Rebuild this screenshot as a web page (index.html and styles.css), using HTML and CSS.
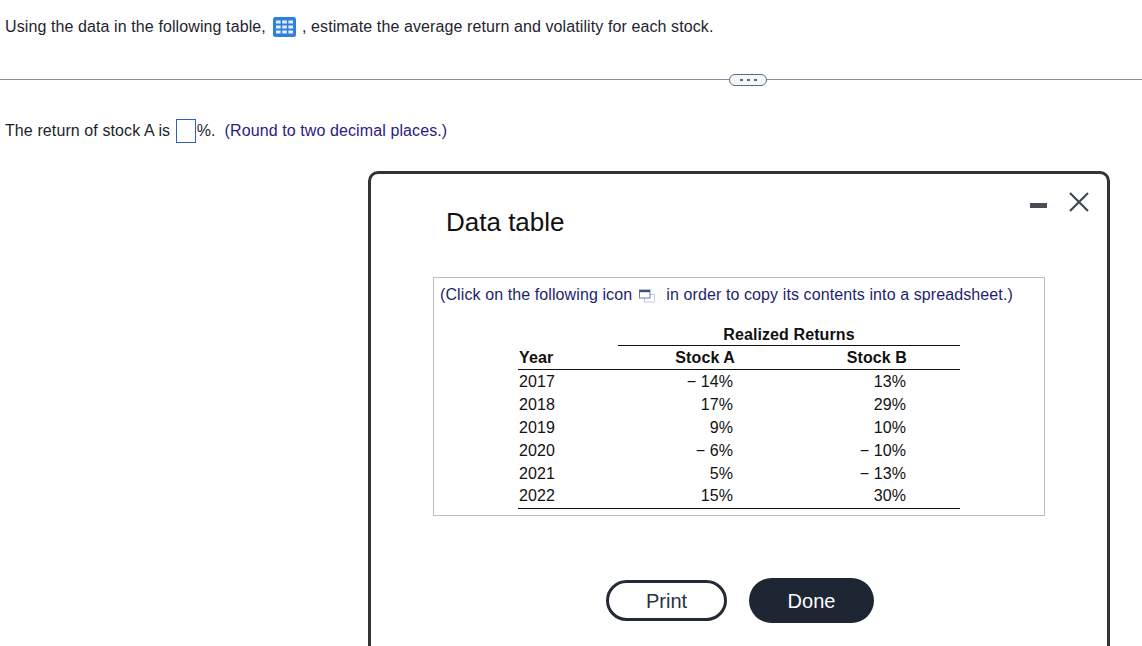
FILE: index.html
```html
<!DOCTYPE html>
<html lang="en">
<head>
<meta charset="utf-8">
<title>Data table</title>
<link rel="stylesheet" href="styles.css">
</head>
<body>
<main class="page">
  <p class="question">Using the data in the following table,
    <svg class="grid-icon" width="23" height="20" viewBox="0 0 23 20"><rect width="23" height="20" rx="2.5" fill="#2f7fdc"/><g fill="#e4f0fc"><rect x="3" y="3.5" width="4.6" height="3"/><rect x="9.2" y="3.5" width="4.6" height="3"/><rect x="15.4" y="3.5" width="4.6" height="3"/><rect x="3" y="8.5" width="4.6" height="3"/><rect x="9.2" y="8.5" width="4.6" height="3"/><rect x="15.4" y="8.5" width="4.6" height="3"/><rect x="3" y="13.5" width="4.6" height="3"/><rect x="9.2" y="13.5" width="4.6" height="3"/><rect x="15.4" y="13.5" width="4.6" height="3"/></g></svg>
    , estimate the average return and volatility for each stock.</p>
  <div class="divider"><span class="more"><i></i><i></i><i></i></span></div>
  <p class="answer">The return of stock A is <span class="blank"></span><span class="pct">%.</span><span class="hint">(Round to two decimal places.)</span></p>
  <section class="modal">
    <div class="win-controls">
      <span class="minimize"></span>
      <svg class="close" width="20" height="20" viewBox="0 0 20 20"><path d="M1 1 L19 19 M19 1 L1 19" stroke="#3d4a5a" stroke-width="2.2" fill="none"/></svg>
    </div>
    <h1 class="title">Data table</h1>
    <div class="panel">
      <p class="note">(Click on the following icon
        <svg class="copy-icon" width="16" height="14" viewBox="0 0 16 14"><rect x="5.5" y="5.5" width="10" height="7.5" fill="#fff" stroke="#c3c8e4"/><rect x="0.5" y="1" width="10.5" height="8" fill="#fff" stroke="#6f7fa8"/><rect x="0.5" y="1" width="10.5" height="2.2" fill="#3f4f88"/></svg>
        in order to copy its contents into a spreadsheet.)</p>
      <table class="returns">
        <colgroup><col class="c-year"><col class="c-a"><col class="c-b"></colgroup>
        <thead>
          <tr class="group"><th></th><th colspan="2" class="center">Realized Returns</th></tr>
          <tr class="heads"><th class="year">Year</th><th>Stock A</th><th>Stock B</th></tr>
        </thead>
        <tbody>
          <tr><td class="year">2017</td><td>− 14%</td><td>13%</td></tr>
          <tr><td class="year">2018</td><td>17%</td><td>29%</td></tr>
          <tr><td class="year">2019</td><td>9%</td><td>10%</td></tr>
          <tr><td class="year">2020</td><td>− 6%</td><td>− 10%</td></tr>
          <tr><td class="year">2021</td><td>5%</td><td>− 13%</td></tr>
          <tr><td class="year">2022</td><td>15%</td><td>30%</td></tr>
        </tbody>
      </table>
    </div>
    <div class="actions">
      <button class="btn print" type="button">Print</button>
      <button class="btn done" type="button">Done</button>
    </div>
  </section>
</main>
</body>
</html>
```
FILE: styles.css
```css
html, body { margin: 0; height: 646px; overflow: hidden; background: #fff; }
body { font: 16px/18px "Liberation Sans", Arial, sans-serif; color: #1f2430; letter-spacing: 0.1px; }
.page { display: flow-root; }
.question { margin: 16px 0 0 5px; height: 22px; line-height: 22px; white-space: nowrap; }
.grid-icon { vertical-align: -5px; margin: 0 1px 0 3px; }
.divider { margin-top: 41px; height: 1px; background: #8a8f9a; display: flex; justify-content: flex-start; }
.more { margin: -5px 0 0 729px; width: 38px; height: 12px; box-sizing: border-box; border: 1.5px solid #5b6b7c; border-radius: 6px; background: #f4f6f8; display: flex; align-items: center; justify-content: center; gap: 4px; }
.more i { width: 3px; height: 2px; background: #5b6b7c; }
.answer { margin: 38px 0 0 5px; height: 26px; display: flex; align-items: center; white-space: pre; color: #1b1f2a; }
.blank { width: 18px; height: 22px; border: 1px solid #2f5fbf; margin-left: 1px; }
.pct { margin-left: 1px; }
.hint { margin-left: 9px; color: #2e1a80; }
.modal { position: relative; margin: 27px 0 0 368px; width: 742px; height: 475px; box-sizing: border-box; border: 3px solid #333; border-bottom: 0; border-radius: 10px 10px 0 0; }
.win-controls { position: absolute; top: 18px; right: 18px; display: flex; align-items: center; gap: 22px; }
.minimize { width: 17px; height: 5px; margin-top: 6px; background: #4a4d55; }
.title { margin: 31px 0 0 75px; font-size: 26px; line-height: 34px; font-weight: 400; color: #111; letter-spacing: 0; }
.panel { margin: 38px 0 0 62px; width: 612px; height: 239px; box-sizing: border-box; border: 1px solid #bdbdbd; }
.note { margin: 8px 0 0 6px; height: 18px; color: #1d1f6e; white-space: nowrap; }
.copy-icon { vertical-align: -3px; margin: 0 7px 0 2px; }
.returns { margin: 19px 0 0 84px; width: 442px; border-collapse: collapse; table-layout: fixed; color: #111; }
.c-year { width: 100px; }
.c-a { width: 117px; }
.returns th, .returns td { padding: 2px 0 0; height: 23px; box-sizing: border-box; text-align: right; font-weight: 400; }
.returns th { font-weight: 700; }
.returns td:nth-child(2) { padding-right: 2px; }
.returns .year { text-align: left; padding-left: 1px; }
.returns .center { text-align: center; border-bottom: 1px solid #111; }
.group th { height: 22px; padding-top: 3px; }
.heads th { height: 24px; border-bottom: 1px solid #111; padding-top: 2px; }
.returns tbody tr:last-child td { height: 24px; padding-top: 1px; border-bottom: 1px solid #111; }
.returns tbody td:nth-child(3) { padding-right: 54px; }
.returns .heads th:nth-child(3) { padding-right: 53px; }
.actions { display: flex; align-items: center; gap: 22px; margin: 62px 0 0 235px; }
.btn { font: 20px "Liberation Sans", Arial, sans-serif; border-radius: 23px; padding: 2px 0 0; }
.print { width: 121px; height: 41px; background: #fff; color: #2a3040; border: 3px solid #232a38; }
.done { width: 125px; height: 45px; background: #1e2533; color: #fff; border: 0; }
```
